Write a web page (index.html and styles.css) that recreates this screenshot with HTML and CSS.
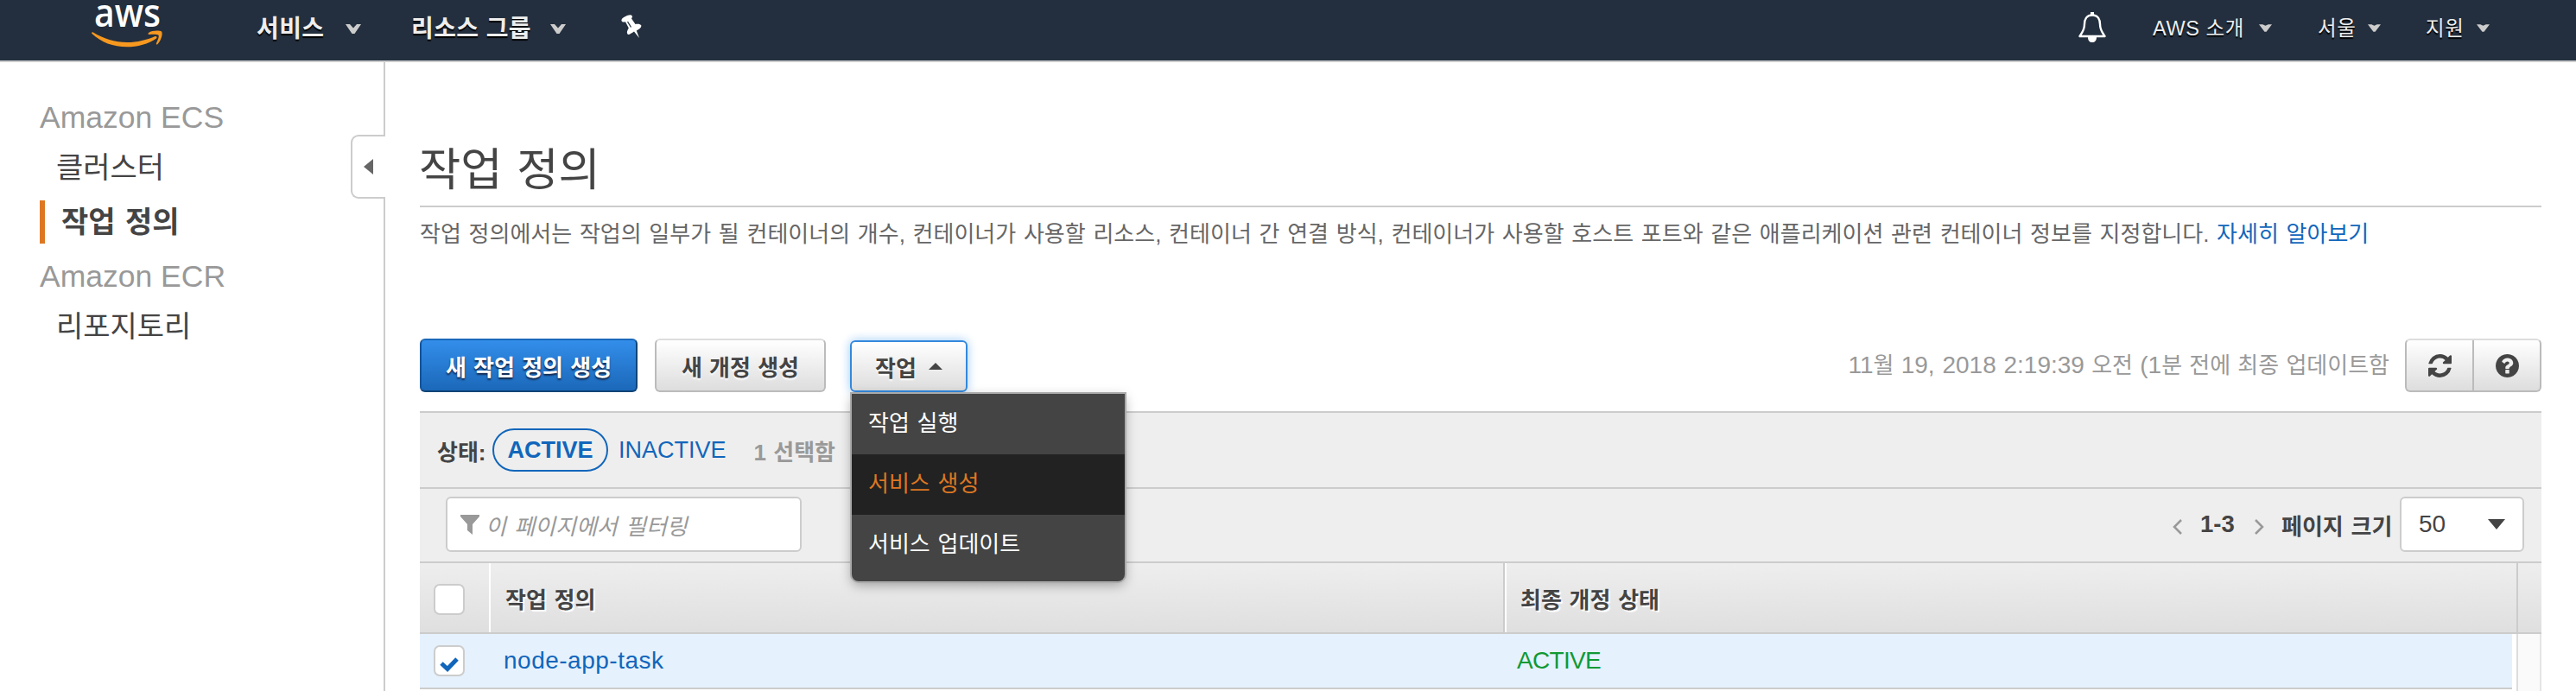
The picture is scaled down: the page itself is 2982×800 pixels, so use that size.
FILE: index.html
```html
<!DOCTYPE html>
<html lang="ko">
<head>
<meta charset="utf-8">
<title>Amazon ECS</title>
<link rel="stylesheet" href="styles.css">
</head>
<body>
<header class="topbar">
  <svg class="logo" viewBox="0 0 82 50" width="82" height="50">
    <text class="logo-text" x="3" y="26.500" textLength="77" lengthAdjust="spacingAndGlyphs">aws</text>
    <path fill="#f7981f" d="M1.500 33.300C14 41 27 45 41 45C53 45 64 42 73 38.200C75 37.500 76.500 39 75 40.500C66 47 53 50.300 41 50.300C25 50.300 11 45 0.500 35C-0.300 34 0.300 32.700 1.500 33.300Z"/>
    <path fill="#f7981f" d="M66 34C70 31 79 31.200 81 32.500C83 35 80 44 76.500 47C75.500 48 74.500 47.500 75 46C76.500 43 78.500 38 77.500 36.800C76 35.400 70 35.800 67 36C65.500 36 65 35 66 34Z"/>
  </svg>
  <nav class="nav">
    <span class="nav-services">서비스</span>
    <svg class="chev chev-services" viewBox="0 0 18 11"><path d="M0 0H5L9 4.500L13 0H18L10.500 11H7.500Z"/></svg>
    <span class="nav-groups">리소스 그룹</span>
    <svg class="chev chev-groups" viewBox="0 0 18 11"><path d="M0 0H5L9 4.500L13 0H18L10.500 11H7.500Z"/></svg>
    <svg class="pin" viewBox="0 0 24 28"><path fill="#fff" d="M0.500 7C0 5 2 3.500 5 2C8 0.300 11 -0.500 12.500 1C13.500 2.500 12.500 3.500 12 4.500L16.500 11C19 10.500 22.500 10.500 23.300 12.500C24 14.500 21 17 17.800 18.500L21 27L15 19.500C12 21.500 8.500 24 7.500 22.500C6 20.500 7.500 17.500 8.800 15.500L5 8.300C3.500 8.800 1 8.800 0.500 7Z"/><path stroke="#232f3e" stroke-width="1.300" d="M7.500 8L11.500 14.500"/></svg>
  </nav>
  <nav class="nav-right">
    <svg class="bell" viewBox="0 0 32 35"><path fill="none" stroke="#fff" stroke-width="2.400" stroke-linejoin="round" d="M16 3.500C9 3.500 7 9 7 14C7 21 4 24 1.500 28H30.500C28 24 25 21 25 14C25 9 23 3.500 16 3.500Z"/><path fill="#fff" d="M14 0H18V4H14ZM11 29H21C21 33 19 35 16 35S11 33 11 29Z"/></svg>
    <span class="nav-account">AWS 소개</span><svg class="chev-sm" viewBox="0 0 14 8"><path d="M0 0H4L7 1.500L10 0H14L8 8H6Z"/></svg>
    <span class="nav-region">서울</span><svg class="chev-sm" viewBox="0 0 14 8"><path d="M0 0H4L7 1.500L10 0H14L8 8H6Z"/></svg>
    <span class="nav-support">지원</span><svg class="chev-sm" viewBox="0 0 14 8"><path d="M0 0H4L7 1.500L10 0H14L8 8H6Z"/></svg>
  </nav>
</header>
<div class="shell">
  <aside class="sidebar">
    <div class="side-title">Amazon ECS</div>
    <div class="side-item">클러스터</div>
    <div class="side-item active">작업 정의</div>
    <div class="side-title second">Amazon ECR</div>
    <div class="side-item">리포지토리</div>
    <div class="collapse"><svg viewBox="0 0 11 18" width="11" height="18"><path fill="#666" d="M11 0V18L0 9Z"/></svg></div>
  </aside>
  <main class="main">
    <h1>작업 정의</h1>
    <p class="desc"><span>작업 정의에서는 작업의 일부가 될 컨테이너의 개수, 컨테이너가 사용할 리소스, 컨테이너 간 연결 방식, 컨테이너가 사용할 호스트 포트와 같은 애플리케이션 관련 컨테이너 정보를 지정합니다. <a>자세히 알아보기</a></span></p>
    <div class="actions">
      <button class="btn primary">새 작업 정의 생성</button>
      <button class="btn revise">새 개정 생성</button>
      <div class="dropdown">
        <button class="btn open">작업<svg viewBox="0 0 16 8" width="16" height="8"><path fill="#444" d="M0 8L8 0L16 8Z"/></svg></button>
        <ul class="menu">
          <li>작업 실행</li>
          <li class="hover">서비스 생성</li>
          <li>서비스 업데이트</li>
        </ul>
      </div>
      <span class="updated"><span class="num">11</span>월 <span class="num">19, 2018 2:19:39</span> 오전 <span class="num">(1</span>분 전에 최종 업데이트함</span>
      <div class="group">
        <button><svg viewBox="0 0 1536 1536" width="27" height="27"><path fill="#444" d="M1511 928q0 5-1 7q-64 268-268 434.500T764 1536q-146 0-282.500-55T238 1324l-129 129q-19 19-45 19t-45-19t-19-45V960q0-26 19-45t45-19h448q26 0 45 19t19 45t-19 45l-137 137q71 66 161 102t187 36q134 0 250-65t186-179q11-17 53-117q8-23 30-23h192q13 0 22.500 9.500t9.500 22.500zm25-800v448q0 26-19 45t-45 19h-448q-26 0-45-19t-19-45t19-45l138-138Q969 256 768 256q-134 0-250 65T332 500q-11 17-53 117q-8 23-30 23H50q-13 0-22.500-9.500T18 608v-7q65-268 270-434.500T768 0q146 0 284 55.500T1297 212l130-129q19-19 45-19t45 19t19 45z"/></svg></button>
        <button><svg viewBox="0 0 1536 1536" width="27" height="27"><path fill="#444" fill-rule="evenodd" d="M896 1248v-192q0-14-9-23t-23-9H672q-14 0-23 9t-9 23v192q0 14 9 23t23 9h192q14 0 23-9t9-23zm256-672q0-88-55.500-163T958 297t-170-41q-243 0-371 213q-15 24 8 42l132 100q7 6 19 6q16 0 25-12q53-68 86-92q34-24 86-24q48 0 85.500 26t37.500 59q0 38-20 61t-68 45q-63 28-115.500 86.500T640 892v36q0 14 9 23t23 9h192q14 0 23-9t9-23q0-19 21.500-49.500T972 829q32-18 49-28.500t46-35t44.500-48t28-60.500t12.500-81zm384 192q0 209-103 385.500T1153.500 1433T768 1536t-385.500-103T103 1153.500T0 768t103-385.500T382.500 103T768 0t385.500 103T1433 382.500T1536 768z"/></svg></button>
      </div>
    </div>
    <section class="panel">
      <div class="status">
        <b class="label">상태:</b><span class="pill">ACTIVE</span><a class="inactive">INACTIVE</a><span class="selected">1 선택함</span>
      </div>
      <div class="filter">
        <div class="search"><svg viewBox="0 0 22 23" width="22" height="23"><path fill="#999" d="M0 0H22V2L14 11V23L8 18V11L0 2Z"/></svg><i>이 페이지에서 필터링</i></div>
        <div class="pager">
          <svg viewBox="0 0 12 18" width="12" height="18"><path d="M10 1L2 9L10 17"/></svg>
          <b class="range">1-3</b>
          <svg viewBox="0 0 12 18" width="12" height="18"><path d="M2 1L10 9L2 17"/></svg>
          <b class="size">페이지 크기</b>
          <div class="select"><span>50</span><svg viewBox="0 0 20 12" width="20" height="12"><path d="M0 0H20L10 12Z"/></svg></div>
        </div>
      </div>
      <div class="row head">
        <div class="c-check"><span class="box"></span></div>
        <div class="c-name"><span>작업 정의</span></div>
        <div class="c-state"><span>최종 개정 상태</span></div>
        <div class="c-end"></div>
      </div>
      <div class="body">
        <div class="row item">
          <div class="c-check"><span class="box"><svg viewBox="0 0 24 18" width="24" height="18"><path d="M3 8L10 14.500L21 3"/></svg></span></div>
          <div class="c-name"><a>node-app-task</a></div>
          <div class="c-state green">ACTIVE</div>
        </div>
        <div class="track"></div>
      </div>
    </section>
  </main>
</div>
</body>
</html>
```
FILE: styles.css
```css
* { box-sizing: border-box; }
body { margin: 0; height: 800px; overflow: hidden; background: #fff; color: #444; font-family: "Liberation Sans", "Noto Sans CJK KR", sans-serif; font-size: 26px; }
svg { display: block; flex: none; }
button { font-family: inherit; padding: 0; margin: 0; }
a { color: #1166bb; }
.topbar { height: 72px; background: #232f3e; border-bottom: 2px solid #ccc; display: flex; align-items: flex-start; color: #eee; }
.logo { margin: 4px 0 0 106px; overflow: visible; }
.logo-text { font: 600 45px "Open Sans", sans-serif; fill: #fff; }
.nav, .nav-right { display: flex; align-items: center; height: 62px; white-space: nowrap; text-shadow: 0 2px 1px #000; }
.nav { font-weight: 700; font-size: 28px; margin-left: 109px; letter-spacing: .4px; }
.nav-services { width: 103px; }
.nav-groups { width: 161px; margin-left: 58px; }
.chev { width: 18px; height: 11px; fill: #ccc; margin-top: 4px; }
.pin { width: 24px; height: 28px; margin-left: 64px; }
.nav-right { margin-left: auto; margin-right: 100px; font-size: 23.500px; letter-spacing: .6px; color: #eee; }
.bell { width: 32px; height: 35px; margin-right: 54px; }
.chev-sm { width: 15px; height: 9px; fill: #ccc; margin-top: 2px; }
.nav-account { width: 123px; }
.nav-region { width: 58px; margin-left: 53px; }
.nav-support { width: 59px; margin-left: 52px; }
.shell { display: flex; height: 728px; }
.sidebar { width: 446px; border-right: 2px solid #ccc; padding: 40px 0 0 46px; position: relative; white-space: nowrap; }
.side-title { height: 50px; line-height: 48px; font-size: 35.500px; color: #999; }
.side-item { height: 64px; line-height: 64px; padding-left: 19px; font-size: 34px; }
.side-item.active { height: 50px; line-height: 50px; margin: 6px 0 14px; border-left: 6px solid #dd7722; padding-left: 19px; font-weight: 700; word-spacing: 2px; }
.collapse { position: absolute; left: 406px; top: 84px; width: 40px; height: 74px; border: 2px solid #ccc; border-right: 0; border-radius: 9px 0 0 9px; background: #fff; display: flex; align-items: center; padding-left: 13px; }
.main { flex: 1; padding: 0 40px; white-space: nowrap; }
h1 { margin: 0; height: 168px; border-bottom: 2px solid #ccc; padding-top: 85px; font-size: 52.500px; line-height: 80px; font-weight: 400; word-spacing: 2px; text-indent: -1px; }
.desc { margin: 0; height: 152px; line-height: 62px; color: #666; word-spacing: 1.500px; }
.actions { display: flex; height: 84px; align-items: flex-start; }
.btn { height: 62px; border: 2px solid #bbb; border-top-color: #ddd; border-radius: 6px; background: linear-gradient(#fff, #ddd); font-size: 26px; font-weight: 700; color: #444; text-align: center; text-shadow: 0 2px 2px #fff; word-spacing: 1px; }
.primary { width: 252px; color: #fff; background: linear-gradient(#338eea, #1b68b9); border-color: #1b68b9 #114477 #114477 #14549a; text-shadow: 0 2px 2px #124; }
.revise { width: 198px; margin-left: 20px; }
.dropdown { margin-left: 28px; position: relative; padding-top: 2px; }
.open { width: 136px; height: 60px; border-color: #3388dd; box-shadow: 0 0 12px #9bcaf5; display: flex; justify-content: center; align-items: center; gap: 14px; }
.menu { position: absolute; z-index: 2; left: 2px; top: 64px; width: 316px; height: 217px; margin: 0; padding: 0; list-style: none; background: #444; color: #fff; border-radius: 0 0 8px 8px; box-shadow: 0 0 0 2px #aaa, 0 4px 14px rgba(0,0,0,.35); }
.menu li { height: 70px; line-height: 69px; padding-left: 19px; word-spacing: 1.500px; }
.menu .hover { background: #222; color: #dd7722; }
.updated { margin-left: auto; color: #999; line-height: 62px; word-spacing: 1px; }
.num { font-size: 28px; line-height: 1; }
.group { display: flex; margin-left: 18px; width: 158px; height: 62px; border: 2px solid #bbb; border-top-color: #ddd; border-radius: 6px; background: linear-gradient(#fff, #ddd); }
.group button { flex: 1; border: 0; background: none; display: flex; align-items: center; justify-content: center; }
.group button + button { border-left: 2px solid #bbb; }
.panel { border-top: 2px solid #ccc; background: #eee; }
.status { height: 88px; border-bottom: 2px solid #ccc; display: flex; align-items: center; padding-left: 20px; }
.label { width: 64px; }
.pill { width: 134px; height: 50px; border: 2px solid #1166bb; border-radius: 25px; color: #1166bb; font-weight: 700; text-align: center; line-height: 47px; font-size: 27px; }
.inactive { margin-left: 12px; font-size: 27px; }
.selected { margin-left: 32px; color: #999; font-weight: 700; word-spacing: 1px; }
.filter { height: 86px; border-bottom: 2px solid #ccc; display: flex; align-items: center; justify-content: space-between; padding: 0 20px 2px 30px; }
.search { width: 412px; height: 64px; border: 2px solid #ccc; border-radius: 6px; background: #fff; display: flex; align-items: center; gap: 7px; padding-left: 15px; color: #999; word-spacing: 2px; }
.pager { display: flex; align-items: center; }
.pager > svg { fill: none; stroke: #999; stroke-width: 2.500; margin-top: 6px; }
.range { width: 42px; margin: 0 20px; font-size: 27.500px; }
.size { width: 129px; margin: 0 8px 0 20px; word-spacing: 1.500px; }
.select { width: 144px; height: 64px; border: 2px solid #ccc; border-radius: 6px; background: #fff; display: flex; align-items: center; justify-content: space-between; padding: 0 20px; font-size: 28px; }
.select svg { fill: #444; }
.row { display: flex; align-items: stretch; }
.head { height: 82px; background: linear-gradient(#eee, #dfdfdf); border-bottom: 2px solid #ccc; font-weight: 700; text-shadow: 2px 2px 1px #fff; word-spacing: 1.500px; }
.row > div { display: flex; align-items: center; }
.c-check { width: 80px; padding-left: 16px; }
.c-name { width: 1176px; padding-left: 17px; }
.c-state { flex: 1; padding-left: 14px; }
.head .c-check { padding-top: 4px; }
.head .c-name, .head .c-state { border-left: 2px solid #fff; }
.head .c-name { border-right: 2px solid #ccc; }
.head .c-state { padding-left: 16px; }
.c-end { width: 29px; border-left: 2px solid #ccc; }
.box { width: 36px; height: 36px; border: 2px solid #ccc; border-radius: 7px; background: #fff; display: flex; align-items: center; justify-content: center; }
.box svg { fill: none; stroke: #1166bb; stroke-width: 5; margin-top: 7px; }
.body { display: flex; background: #fff; }
.item { width: 2422px; height: 64px; background: #e5f1fd; border-bottom: 2px solid #ccc; font-size: 28px; }
.item .c-name { letter-spacing: .5px; }
.green { color: #119933; letter-spacing: -.7px; }
.track { width: 29px; height: 66px; margin-left: 5px; background: #fafafa; border-left: 2px solid #ddd; border-right: 2px solid #e5e5e5; }
```
